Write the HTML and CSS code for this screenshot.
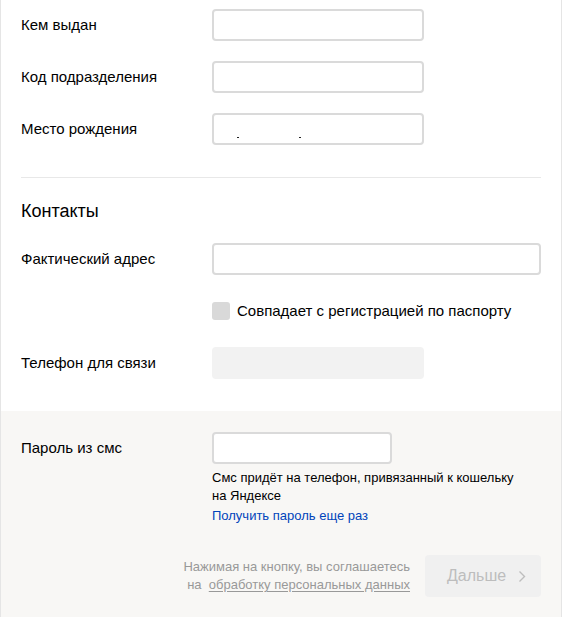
FILE: index.html
```html
<!DOCTYPE html>
<html lang="ru">
<head>
  <meta charset="UTF-8" />
  <title>Анкета</title>
  <link rel="stylesheet" href="styles.css">
</head>
<body>
  <div class="page">
    <section class="form">
      <div class="row">
        <label class="label">Кем выдан</label>
        <input class="field" type="text">
      </div>
      <div class="row">
        <label class="label">Код подразделения</label>
        <input class="field" type="text">
      </div>
      <div class="row">
        <label class="label">Место рождения</label>
        <div class="field field-masked"><i></i><i></i></div>
      </div>

      <hr class="sep">

      <h2 class="title">Контакты</h2>

      <div class="row">
        <label class="label">Фактический адрес</label>
        <input class="field field-wide" type="text">
      </div>
      <div class="row row-check">
        <span class="check"></span>
        <span class="check-text">Совпадает с регистрацией по паспорту</span>
      </div>
      <div class="row">
        <label class="label">Телефон для связи</label>
        <div class="field field-disabled"></div>
      </div>
    </section>

    <section class="confirm">
      <div class="row row-top">
        <label class="label">Пароль из смс</label>
        <div class="sms">
          <input class="field field-short" type="text">
          <p class="hint">Смс придёт на телефон, привязанный к кошельку<br>на Яндексе</p>
          <a class="link" href="#">Получить пароль еще раз</a>
        </div>
      </div>

      <div class="actions">
        <p class="agree">
          Нажимая на кнопку, вы соглашаетесь<br>
          на&nbsp; <a href="#">обработку персональных данных</a>
        </p>
        <button class="next" disabled>
          Дальше
          <svg width="8" height="13" viewBox="0 0 8 13"><path d="M1.5 1.5l5 5-5 5" fill="none" stroke="#bdbdbd" stroke-width="1.4"/></svg>
        </button>
      </div>
    </section>
  </div>
</body>
</html>
```

FILE: styles.css
```css
html, body { margin: 0; padding: 0; background: #fff; }
body {
  font-family: "Liberation Sans", Arial, sans-serif;
  font-size: 15px;
  color: #000;
}
.page {
  width: 560px;
  border-left: 1px solid #e5e5e5;
  border-right: 1px solid #e5e5e5;
  min-height: 617px;
  display: flex; flex-direction: column;
}
.form { padding: 9px 20px 32px; }
.row {
  display: flex; align-items: center;
  margin-bottom: 20px;
}
.row:last-child { margin-bottom: 0; }
.label { width: 191px; flex: 0 0 191px; line-height: 18px; }
.field {
  box-sizing: border-box;
  width: 212px; height: 32px;
  border: 2px solid #dadada; border-radius: 4px;
  background: #fff; padding: 0 8px;
  font: inherit; outline: none;
}
.field-wide { width: 329px; }
.field-short { width: 180px; display: block; }
.field-disabled { border: none; background: #f2f2f2; }
/* hidden value: only two specks of it show */
.field-masked { position: relative; }
.field-masked i {
  position: absolute; top: 22px; left: 23px;
  width: 2px; height: 1px; background: #222;
}
.field-masked i + i { left: 85px; }

.sep {
  border: none; border-top: 1px solid #e8e8e8;
  margin: 32px 0 21px;
}
.title {
  margin: 0 0 20px;
  font-size: 18px; font-weight: normal; line-height: 24px;
}
.row-check { padding-left: 191px; margin: 27px 0; }
.check {
  width: 18px; height: 18px; border-radius: 3px;
  background: #d9d9d9; margin-right: 7px;
}
.check-text { line-height: 18px; }

.confirm {
  flex: 1;
  background: #f8f7f5;
  padding: 21px 20px 20px;
}
.row-top { align-items: flex-start; margin-bottom: 0; }
.row-top .label { line-height: 32px; }
.hint {
  margin: 5px 0 0;
  font-size: 13px; line-height: 18px;
}
.link {
  display: block; margin-top: 2px;
  font-size: 13px; line-height: 18px;
  color: #04b; text-decoration: none;
}
.actions {
  display: flex; justify-content: flex-end; align-items: center;
  gap: 15px; margin-top: 30px;
}
.agree {
  margin: 0; text-align: right;
  font-size: 13px; line-height: 18px; color: #999;
}
.agree a { color: #999; text-decoration: underline; text-underline-offset: 2px; }
.next {
  display: flex; align-items: center; justify-content: space-between;
  width: 116px; height: 42px;
  padding: 0 15px 0 22px;
  border: none; border-radius: 4px;
  background: #f0f0f0; color: #bdbdbd;
  font: 16px "Liberation Sans", Arial, sans-serif;
}
```
